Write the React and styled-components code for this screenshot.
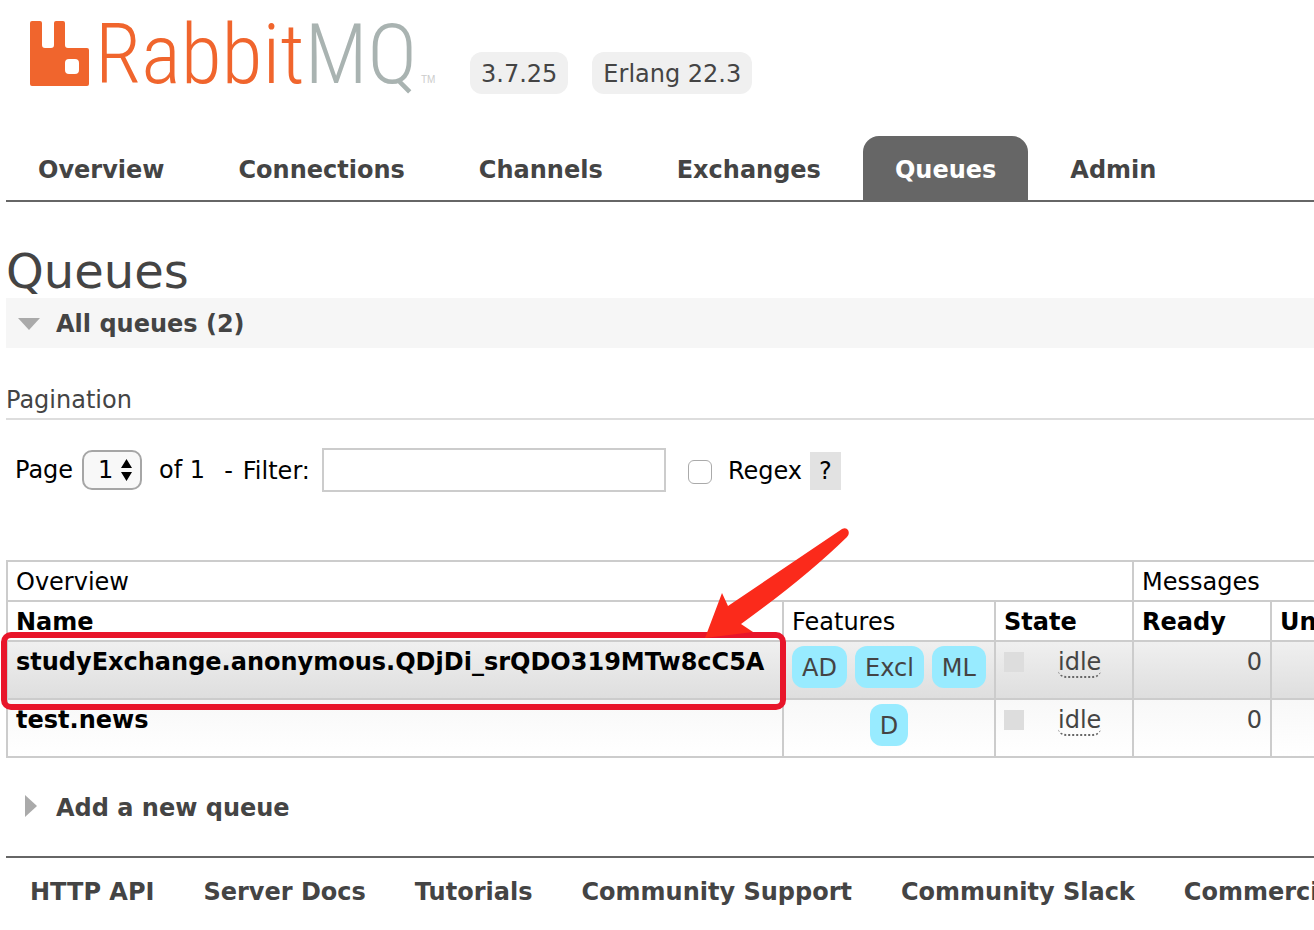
import { useState } from "react";
import styled, { createGlobalStyle } from "styled-components";

const colors = {
  text: "#444",
  black: "#000",
  line: "#ccc",
  nav: "#666",
  orange: "#f0652d",
  gray: "#a9b3b1",
  badge: "#f0f0f0",
  feature: "#98ebff",
  mark: "#e8152a",
  arrow: "#fb2a1b",
};

const tabs = ["Overview", "Connections", "Channels", "Exchanges", "Queues", "Admin"];

const queues = [
  {
    name: "studyExchange.anonymous.QDjDi_srQDO319MTw8cC5A",
    features: ["AD", "Excl", "ML"],
    state: "idle",
    ready: 0,
    unacked: 0,
    marked: true,
  },
  { name: "test.news", features: ["D"], state: "idle", ready: 0, unacked: 0 },
];

const footerLinks = [
  "HTTP API",
  "Server Docs",
  "Tutorials",
  "Community Support",
  "Community Slack",
  "Commercial Support",
];

function Logo() {
  return (
    <LogoSvg viewBox="0 0 410 90" role="img" aria-label="RabbitMQ">
      <path
        fill={colors.orange}
        fillRule="evenodd"
        d="M2 17h8a2 2 0 0 1 2 2v22a3 3 0 0 0 3 3h6a3 3 0 0 0 3-3V19a2 2 0 0 1 2-2h7a2 2 0 0 1 2 2v22a3 3 0 0 0 3 3h19a2 2 0 0 1 2 2v34a2 2 0 0 1-2 2H2a2 2 0 0 1-2-2V19a2 2 0 0 1 2-2zM39 55a4 4 0 0 0-4 4v7a4 4 0 0 0 4 4h6a4 4 0 0 0 4-4v-7a4 4 0 0 0-4-4z"
      />
      <LogoText x="65" y="79">
        <tspan fill={colors.orange}>Rabbit</tspan>
        <tspan fill={colors.gray}>MQ</tspan>
      </LogoText>
      <TradeMark x="391" y="79">TM</TradeMark>
    </LogoSvg>
  );
}

function QueueRow({ queue }) {
  return (
    <Row $shaded={queue.marked}>
      <NameCell>
        <a href="#queue">{queue.name}</a>
        {queue.marked && (
          <>
            <Highlight />
            <Arrow viewBox="0 0 144 112" aria-hidden="true">
              <path
                fill={colors.arrow}
                d="M0 110L17 65L23 78L137 1Q141 -1 143 2Q145 6 142 9Q100 50 36 96L48 104Z"
              />
            </Arrow>
          </>
        )}
      </NameCell>
      <FeatureCell>
        <Features>
          {queue.features.map((feature) => (
            <Feature key={feature}>{feature}</Feature>
          ))}
        </Features>
      </FeatureCell>
      <Cell>
        <State>
          <StateLabel>{queue.state}</StateLabel>
        </State>
      </Cell>
      <NumberCell>{queue.ready}</NumberCell>
      <NumberCell>{queue.unacked}</NumberCell>
    </Row>
  );
}

export default function App() {
  const [page, setPage] = useState("1");
  const [filter, setFilter] = useState("");
  const [regex, setRegex] = useState(false);

  return (
    <>
      <GlobalStyle />
      <Page>
        <Header>
          <Logo />
          <Version>3.7.25</Version>
          <Version>Erlang 22.3</Version>
        </Header>
        <Nav>
          {tabs.map((tab) => (
            <Tab key={tab} href="#tab" $active={tab === "Queues"}>
              {tab}
            </Tab>
          ))}
        </Nav>
        <main>
          <Title>Queues</Title>
          <SectionTitle $open>
            <DownIcon viewBox="0 0 22 12" aria-hidden="true">
              <path d="M0 0h22L11 12z" />
            </DownIcon>
            All queues (2)
          </SectionTitle>
          <SubTitle>Pagination</SubTitle>
          <Controls>
            <label htmlFor="page">Page</label>
            <SelectWrap>
              <PageSelect id="page" value={page} onChange={(e) => setPage(e.target.value)}>
                <option>1</option>
              </PageSelect>
              <SelectIcon viewBox="0 0 11 22" aria-hidden="true">
                <path d="M0 9L5.500 0L11 9zM0 13h11L5.500 22z" />
              </SelectIcon>
            </SelectWrap>
            <PageCount>of 1</PageCount>
            <FilterLabel htmlFor="filter">
              <span>-</span>
              <span>Filter:</span>
            </FilterLabel>
            <FilterInput
              id="filter"
              type="text"
              value={filter}
              onChange={(e) => setFilter(e.target.value)}
            />
            <Checkbox
              id="regex"
              type="checkbox"
              checked={regex}
              onChange={(e) => setRegex(e.target.checked)}
            />
            <FilterLabel htmlFor="regex">Regex</FilterLabel>
            <Help type="button">?</Help>
          </Controls>
          <Table>
            <colgroup>
              <NameCol />
              <FeatureCol />
              <Col />
              <Col />
              <Col />
            </colgroup>
            <thead>
              <tr>
                <HeadCell colSpan={3}>Overview</HeadCell>
                <HeadCell colSpan={2}>Messages</HeadCell>
              </tr>
              <tr>
                <HeadCell $bold>Name</HeadCell>
                <HeadCell>Features</HeadCell>
                <HeadCell $bold>State</HeadCell>
                <HeadCell $bold>Ready</HeadCell>
                <HeadCell $bold>Unacked</HeadCell>
              </tr>
            </thead>
            <tbody>
              {queues.map((queue) => (
                <QueueRow key={queue.name} queue={queue} />
              ))}
            </tbody>
          </Table>
          <SectionTitle>
            <RightIcon viewBox="0 0 12 22" aria-hidden="true">
              <path d="M0 0v22L12 11z" />
            </RightIcon>
            Add a new queue
          </SectionTitle>
        </main>
        <Footer>
          {footerLinks.map((link) => (
            <a key={link} href="#docs">
              {link}
            </a>
          ))}
        </Footer>
      </Page>
    </>
  );
}

const GlobalStyle = createGlobalStyle`
  * {
    box-sizing: border-box;
  }
  body {
    margin: 0;
    background: #fff;
    color: ${colors.text};
    font-family: Verdana, "DejaVu Sans", sans-serif;
    font-size: 24px;
    line-height: 28px;
  }
  a {
    color: inherit;
    text-decoration: none;
  }
`;

const Page = styled.div`
  padding-left: 6px;
  overflow: hidden;
  white-space: nowrap;
`;

const Header = styled.header`
  display: flex;
  align-items: flex-end;
  gap: 24px;
  height: 94px;
  padding-left: 24px;
`;
const LogoSvg = styled.svg`
  width: 410px;
  height: 90px;
  margin-right: 6px;
  flex-shrink: 0;
  overflow: visible;
`;
const LogoText = styled.text`
  font-family: "Roboto Condensed", Roboto, sans-serif;
  font-size: 84px;
  font-weight: 300;
`;
const TradeMark = styled.text`
  font-family: "Liberation Sans", sans-serif;
  font-size: 10px;
  fill: ${colors.line};
`;
const Version = styled.span`
  padding: 8px 11px 6px;
  border-radius: 12px;
  background: ${colors.badge};
`;

const Nav = styled.nav`
  display: flex;
  gap: 10px;
  margin-top: 42px;
  border-bottom: 2px solid ${colors.nav};
`;
const Tab = styled.a`
  padding: 20px 32px 16px;
  border-radius: 16px 16px 0 0;
  font-weight: 700;
  color: ${(props) => (props.$active ? "#fff" : colors.text)};
  background: ${(props) => (props.$active ? colors.nav : "transparent")};
`;

const Title = styled.h1`
  margin: 42px 0 0;
  font-size: 48px;
  font-weight: 400;
  line-height: 54px;
`;
const SectionTitle = styled.h2`
  display: flex;
  align-items: center;
  margin: 0;
  padding: 12px 12px 10px;
  font-size: 24px;
  line-height: 28px;
  background: ${(props) => (props.$open ? "#f6f6f6" : "transparent")};
`;
const DownIcon = styled.svg`
  width: 22px;
  height: 12px;
  margin-right: 16px;
  fill: #aaa;
`;
const RightIcon = styled.svg`
  width: 12px;
  height: 22px;
  margin: 0 19px 4px 7px;
  fill: #aaa;
`;
const SubTitle = styled.h3`
  margin: 38px 0 0;
  padding-bottom: 4px;
  border-bottom: 2px solid #ddd;
  font-size: 24px;
  font-weight: 400;
`;

const Controls = styled.form`
  display: flex;
  align-items: center;
  margin: 28px 0 68px;
  padding-left: 9px;
  color: ${colors.black};
`;
const SelectWrap = styled.span`
  position: relative;
  margin: 0 17px 0 9px;
`;
const PageSelect = styled.select`
  display: block;
  width: 60px;
  height: 40px;
  padding: 0 0 0 14px;
  border: 2px solid #a6a6a6;
  border-radius: 10px;
  background: #f8f8f8;
  color: inherit;
  font: inherit;
  appearance: none;
`;
const SelectIcon = styled.svg`
  position: absolute;
  top: 9px;
  right: 10px;
  width: 11px;
  height: 22px;
  pointer-events: none;
`;
const PageCount = styled.span`
  margin-right: 19px;
`;
const FilterLabel = styled.label`
  display: flex;
  gap: 10px;
  padding-top: 2px;
`;
const FilterInput = styled.input`
  width: 344px;
  height: 44px;
  margin-left: 12px;
  border: 2px solid ${colors.line};
  font: inherit;
`;
const Checkbox = styled.input`
  width: 24px;
  height: 24px;
  margin: 4px 16px 0 22px;
  border: 1px solid #aaa;
  border-radius: 6px;
  background: #fff;
  appearance: none;
  &:checked {
    background: ${colors.nav};
  }
`;
const Help = styled.button`
  height: 38px;
  margin: 2px 0 0 8px;
  padding: 0 9px;
  border: 0;
  background: #e2e2e2;
  font: inherit;
`;

const Table = styled.table`
  table-layout: fixed;
  width: 1402px;
  margin-bottom: 24px;
  border-collapse: collapse;
`;
const Col = styled.col`
  width: 138px;
`;
const NameCol = styled.col`
  width: 776px;
`;
const FeatureCol = styled.col`
  width: 212px;
`;
const HeadCell = styled.th`
  height: 40px;
  padding: 6px 8px 4px;
  border: 2px solid ${colors.line};
  color: ${colors.black};
  font-weight: ${(props) => (props.$bold ? 700 : 400)};
  text-align: left;
`;
const Row = styled.tr`
  height: 58px;
  background: ${(props) =>
    props.$shaded
      ? "linear-gradient(#f0f0f0, #dedede)"
      : "linear-gradient(#f8f8f8, #fff)"};
`;
const Cell = styled.td`
  padding: 6px 8px 4px;
  border: 2px solid ${colors.line};
  vertical-align: top;
`;
const NameCell = styled(Cell)`
  position: relative;
  color: ${colors.black};
  font-weight: 700;
`;
const FeatureCell = styled(Cell)`
  padding-top: 4px;
`;
const NumberCell = styled(Cell)`
  text-align: right;
`;
const Highlight = styled.span`
  position: absolute;
  inset: -10px -4px -12px -7px;
  border: 6px solid ${colors.mark};
  border-radius: 10px;
  pointer-events: none;
`;
const Arrow = styled.svg`
  position: absolute;
  right: -67px;
  bottom: 58px;
  width: 144px;
  height: 112px;
  pointer-events: none;
`;
const Features = styled.div`
  display: flex;
  justify-content: center;
  gap: 8px;
`;
const Feature = styled.span`
  padding: 8px 10px 6px;
  border-radius: 12px;
  background: ${colors.feature};
`;
const State = styled.div`
  display: flex;
  align-items: center;
  &::before {
    content: "";
    width: 20px;
    height: 20px;
    margin: 0 34px 2px 0;
    background: #ddd;
  }
`;
const StateLabel = styled.abbr`
  border-bottom: 2px dotted ${colors.nav};
  border-radius: 8px;
`;

const Footer = styled.footer`
  display: flex;
  gap: 49px;
  margin-top: 24px;
  padding: 20px 24px;
  border-top: 2px solid ${colors.nav};
  font-weight: 700;
`;
